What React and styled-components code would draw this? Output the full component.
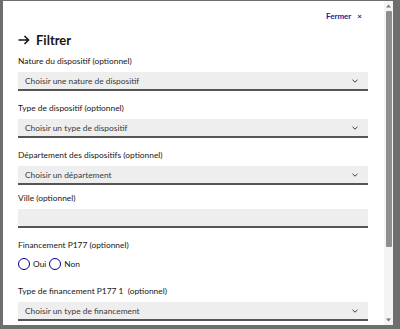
import React from 'react';
import styled, { createGlobalStyle } from 'styled-components';

const GlobalStyle = createGlobalStyle`
  html, body {
    margin: 0;
    height: 100%;
    background: #6e6e6e;
  }
  body {
    padding: 1px 7px 4px 3px;
    box-sizing: border-box;
    font-family: Lato, "Noto Sans", sans-serif;
    color: #161616;
  }
  #root {
    height: 100%;
  }
`;

const Modal = styled.div`
  background: #fff;
  height: 100%;
  display: flex;
  overflow: hidden;
`;

const Content = styled.div`
  flex: 1;
  min-width: 0;
  overflow: hidden;
  padding: 10px 16px 0 15px;
  display: flex;
  flex-direction: column;
`;

const Scrollbar = styled.div`
  width: 9px;
  flex-shrink: 0;
  background: #f4f4f4;
  display: flex;
  flex-direction: column;
  align-items: center;
`;

const ScrollArrow = styled.div`
  height: 10px;
  width: 100%;
  display: flex;
  align-items: center;
  justify-content: center;
`;

const Thumb = styled.div`
  width: 6px;
  margin-left: 1px;
  height: 236px;
  background: #8e8e8e;
  border-radius: 1px;
`;

const Spacer = styled.div`
  flex: 1;
`;

const Header = styled.div`
  display: flex;
  justify-content: flex-end;
  padding-right: 6px;
`;

const CloseButton = styled.button`
  background: none;
  border: none;
  padding: 0;
  font-family: inherit;
  font-size: 8px;
  line-height: 10px;
  font-weight: 700;
  color: #1a1a9a;
  display: flex;
  align-items: center;
  gap: 6px;
  cursor: pointer;
`;

const Title = styled.h1`
  margin: 11px 0 0;
  font-size: 13px;
  line-height: 16px;
  font-weight: 700;
  display: flex;
  align-items: center;
  gap: 6px;
  color: #161616;
`;

const Field = styled.div`
  display: flex;
  flex-direction: column;
  flex-shrink: 0;
  margin-top: ${props => props.top ?? 11}px;
`;

const Label = styled.label`
  font-size: 8.4px;
  line-height: 12px;
  margin-bottom: 5px;
  white-space: nowrap;
`;

const SelectBox = styled.div`
  height: 17px;
  background: #eeeeee;
  border-bottom: 2px solid #555;
  display: flex;
  align-items: center;
  justify-content: space-between;
  padding: 0 10px 0 7px;
  font-size: 8.4px;
  color: #3a3a3a;
`;

const RadioRow = styled.div`
  display: flex;
  align-items: center;
  gap: 3px;
  margin-top: 2px;
  height: 12px;
`;

const Radio = styled.span`
  width: 12px;
  height: 12px;
  border-radius: 50%;
  border: 1px solid #000091;
  box-sizing: border-box;
  display: inline-block;
`;

const RadioText = styled.span`
  font-size: 8.4px;
`;

const Chevron = () => (
  <svg width="6" height="4" viewBox="0 0 6 4">
    <polyline points="0.5,0.8 3,3.2 5.5,0.8" fill="none" stroke="#3a3a3a" strokeWidth="1" />
  </svg>
);

const Arrow = () => (
  <svg width="12" height="10" viewBox="0 0 12 10">
    <path d="M0.5 5 H10.5 M6.5 1 L10.5 5 L6.5 9" fill="none" stroke="#161616" strokeWidth="1.6" />
  </svg>
);

const Triangle = ({ down }) => (
  <svg width="5" height="4" viewBox="0 0 5 4">
    <polygon points={down ? '0,0.5 5,0.5 2.5,3.5' : '0,3.5 5,3.5 2.5,0.5'} fill="#7a7a7a" />
  </svg>
);

const Select = ({ children }) => (
  <SelectBox>
    <span>{children}</span>
    <Chevron />
  </SelectBox>
);

export default function App() {
  return (
    <Modal>
      <GlobalStyle />
      <Content>
        <Header>
          <CloseButton>Fermer <span>×</span></CloseButton>
        </Header>
        <Title><Arrow />Filtrer</Title>
        <Field top={7}>
          <Label>Nature du dispositif (optionnel)</Label>
          <Select>Choisir une nature de dispositif</Select>
        </Field>
        <Field>
          <Label>Type de dispositif (optionnel)</Label>
          <Select>Choisir un type de dispositif</Select>
        </Field>
        <Field>
          <Label>Département des dispositifs (optionnel)</Label>
          <Select>Choisir un département</Select>
        </Field>
        <Field top={7}>
          <Label>Ville (optionnel)</Label>
          <SelectBox />
        </Field>
        <Field>
          <Label>Financement P177 (optionnel)</Label>
          <RadioRow>
            <Radio /><RadioText>Oui</RadioText>
            <Radio /><RadioText>Non</RadioText>
          </RadioRow>
        </Field>
        <Field top={15}>
          <Label>Type de financement P177 1&nbsp; (optionnel)</Label>
          <Select>Choisir un type de financement</Select>
        </Field>
      </Content>
      <Scrollbar>
        <ScrollArrow><Triangle /></ScrollArrow>
        <Thumb />
        <Spacer />
        <ScrollArrow><Triangle down /></ScrollArrow>
      </Scrollbar>
    </Modal>
  );
}
